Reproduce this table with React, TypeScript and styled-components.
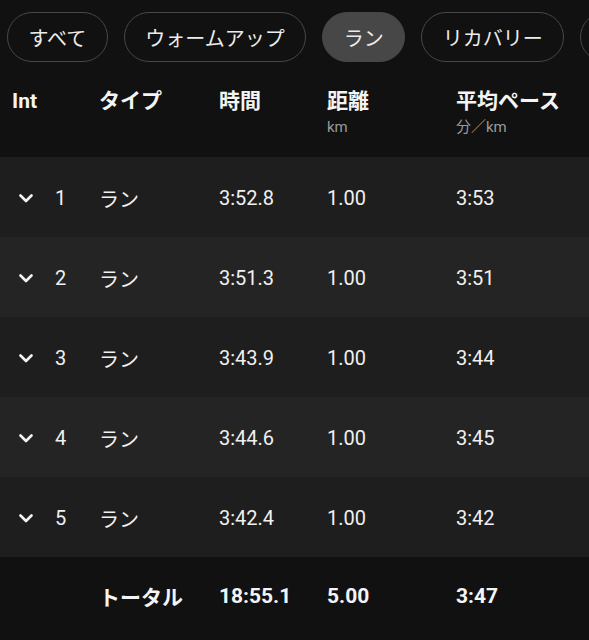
import React from "react";
import styled, { createGlobalStyle } from "styled-components";

const Global = createGlobalStyle`
  html, body { margin: 0; padding: 0; background: #111111; }
  body { font-family: Roboto, "Noto Sans CJK JP", sans-serif; color: #f0f0f0; }
`;

const Page = styled.div`
  width: 589px;
  height: 640px;
  overflow: hidden;
  background: #111111;
`;

const PillBar = styled.div`
  display: flex;
  gap: 16px;
  padding: 12px 0 8px 7px;
  overflow: hidden;
  white-space: nowrap;
`;

const Pill = styled.div<{ $active?: boolean }>`
  flex: none;
  height: 50px;
  box-sizing: border-box;
  padding: 0 20.5px;
  border-radius: 25px;
  border: 1px solid #474747;
  background: ${(p) => (p.$active ? "#474747" : "transparent")};
  display: flex;
  align-items: center;
  font-size: 20px;
  color: #ececec;
`;

const Grid = styled.div`
  display: grid;
  grid-template-columns: 87px 120px 108px 129px 1fr;
  padding-left: 12px;
  align-items: center;
`;

const HeaderRow = styled(Grid)`
  height: 87px;
  align-items: start;
  padding-top: 18px;
  box-sizing: border-box;
`;

const HeadCell = styled.div`
  display: flex;
  flex-direction: column;
`;

const HeadTitle = styled.div`
  font-size: 21px;
  line-height: 26px;
  font-weight: 700;
  color: #f4f4f4;
`;

const HeadSub = styled.div`
  font-size: 15px;
  line-height: 20px;
  margin-top: 3px;
  color: #9a9a9a;
`;

const DataRow = styled(Grid)<{ $alt?: boolean }>`
  height: 80px;
  background: ${(p) => (p.$alt ? "#242424" : "#1e1e1e")};
  font-size: 20px;
  color: #f0f0f0;
  padding-top: 2px;
  box-sizing: border-box;
`;

const TotalRow = styled(Grid)`
  height: 82px;
  font-size: 21px;
  font-weight: 700;
  color: #f4f4f4;
  padding-bottom: 4px;
  box-sizing: border-box;
`;

const IntCell = styled.div`
  display: flex;
  align-items: center;
  padding-left: 7px;
  gap: 22px;
`;

const Cell = styled.div``;

const Chevron = () => (
  <svg width="14" height="9" viewBox="0 0 14 9" fill="none">
    <path d="M1.5 1.5 L7 7 L12.5 1.5" stroke="#f2f2f2" strokeWidth="2.6" strokeLinecap="round" strokeLinejoin="round" />
  </svg>
);

const laps = [
  { n: 1, time: "3:52.8", dist: "1.00", pace: "3:53" },
  { n: 2, time: "3:51.3", dist: "1.00", pace: "3:51" },
  { n: 3, time: "3:43.9", dist: "1.00", pace: "3:44" },
  { n: 4, time: "3:44.6", dist: "1.00", pace: "3:45" },
  { n: 5, time: "3:42.4", dist: "1.00", pace: "3:42" },
];

export default function App() {
  return (
    <Page>
      <Global />
      <PillBar>
        <Pill>すべて</Pill>
        <Pill>ウォームアップ</Pill>
        <Pill $active>ラン</Pill>
        <Pill>リカバリー</Pill>
        <Pill>クールダウン</Pill>
      </PillBar>
      <HeaderRow>
        <HeadCell><HeadTitle>Int</HeadTitle></HeadCell>
        <HeadCell><HeadTitle>タイプ</HeadTitle></HeadCell>
        <HeadCell><HeadTitle>時間</HeadTitle></HeadCell>
        <HeadCell><HeadTitle>距離</HeadTitle><HeadSub>km</HeadSub></HeadCell>
        <HeadCell><HeadTitle>平均ペース</HeadTitle><HeadSub>分／km</HeadSub></HeadCell>
      </HeaderRow>
      {laps.map((l, i) => (
        <DataRow key={l.n} $alt={i % 2 === 1}>
          <IntCell><Chevron /><span>{l.n}</span></IntCell>
          <Cell>ラン</Cell>
          <Cell>{l.time}</Cell>
          <Cell>{l.dist}</Cell>
          <Cell>{l.pace}</Cell>
        </DataRow>
      ))}
      <TotalRow>
        <Cell />
        <Cell>トータル</Cell>
        <Cell>18:55.1</Cell>
        <Cell>5.00</Cell>
        <Cell>3:47</Cell>
      </TotalRow>
    </Page>
  );
}
